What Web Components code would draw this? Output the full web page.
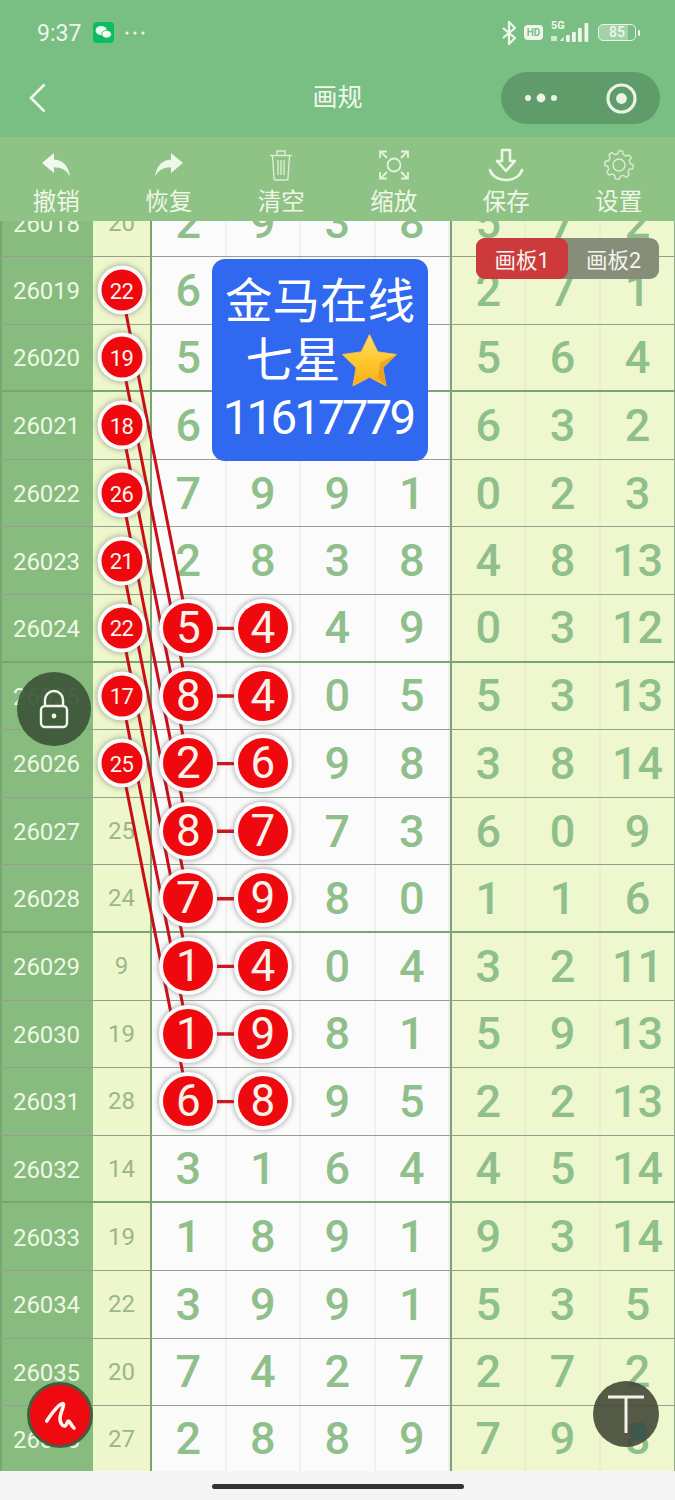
<!DOCTYPE html>
<html lang="zh">
<head>
<meta charset="utf-8">
<title>画规</title>
<style>
  html, body { margin: 0; height: 100%; }
  body { width: 675px; height: 1500px; overflow: hidden; font-family: Roboto, "Noto Sans CJK SC", sans-serif; }
  app-page { height: 1500px; }
</style>
</head>
<body>
<app-page></app-page>
<script>
const CJK = 'Roboto, "Noto Sans CJK SC", sans-serif';
const ROW_H = 67.6;

// issue, sum, four digits, three right columns
const DATA = [
  ['26018', 20, 2, 9, 3, 8, 5, 7, 2],
  ['26019', 22, 6, '', '', '', 2, 7, 1],
  ['26020', 19, 5, '', '', '', 5, 6, 4],
  ['26021', 18, 6, '', '', '', 6, 3, 2],
  ['26022', 26, 7, 9, 9, 1, 0, 2, 3],
  ['26023', 21, 2, 8, 3, 8, 4, 8, 13],
  ['26024', 22, 5, 4, 4, 9, 0, 3, 12],
  ['26025', 17, 8, 4, 0, 5, 5, 3, 13],
  ['26026', 25, 2, 6, 9, 8, 3, 8, 14],
  ['26027', 25, 8, 7, 7, 3, 6, 0, 9],
  ['26028', 24, 7, 9, 8, 0, 1, 1, 6],
  ['26029', 9, 1, 4, 0, 4, 3, 2, 11],
  ['26030', 19, 1, 9, 8, 1, 5, 9, 13],
  ['26031', 28, 6, 8, 9, 5, 2, 2, 13],
  ['26032', 14, 3, 1, 6, 4, 4, 5, 14],
  ['26033', 19, 1, 8, 9, 1, 9, 3, 14],
  ['26034', 22, 3, 9, 9, 1, 5, 3, 5],
  ['26035', 20, 7, 4, 2, 7, 2, 7, 2],
  ['26036', 27, 2, 8, 8, 9, 7, 9, 8]
];

class StatusBar extends HTMLElement {
  constructor() {
    super();
    this.attachShadow({ mode: 'open' });
    this.shadowRoot.innerHTML = `
      <style>
        :host { display: flex; align-items: center; height: 65px; padding: 0 35px 0 37px; color: #eef7ea; box-sizing: border-box; }
        .time { font-size: 23px; width: 56px; padding-top: 1px; }
        .right { margin-left: auto; display: flex; align-items: center; }
        svg { display: block; }
        .hd { width: 19px; height: 15px; border-radius: 4px; background: #eef7ea; color: #79bf83; font-size: 10px; font-weight: 700; line-height: 15px; text-align: center; margin: 0 8px 0 8px; }
        .net { position: relative; width: 41px; height: 22px; margin-right: 6px; }
        .net span { position: absolute; left: 0; top: -2px; font-size: 11px; font-weight: 700; line-height: 12px; }
        .net svg { position: absolute; left: 0; top: 0; }
        .battery { position: relative; width: 38px; height: 17px; border: 1.5px solid #eef7ea; border-radius: 5px; box-sizing: border-box; font-size: 14px; font-weight: 500; line-height: 14px; text-align: center; overflow: hidden; }
        .battery i { position: absolute; left: 0; top: 0; bottom: 0; width: 80%; background: rgba(215,232,210,.45); }
        .battery b { position: relative; font-weight: 500; }
        .tip { width: 2px; height: 6px; margin-left: 2px; background: #eef7ea; border-radius: 1px; }
      </style>
      <span class="time">9:37</span>
      <svg width="21" height="21" viewBox="0 0 21 21">
        <rect width="21" height="21" rx="4" fill="#0bbd62"/>
        <ellipse cx="8.2" cy="8.6" rx="5.6" ry="4.6" fill="#eef9ee"/>
        <ellipse cx="13.6" cy="12.2" rx="4.8" ry="3.9" fill="#f8fff8" stroke="#0bbd62" stroke-width=".8"/>
      </svg>
      <svg width="20" height="4" viewBox="0 0 20 4" style="margin-left:11px">
        <circle cx="2" cy="2" r="1.6" fill="#eef7ea"/><circle cx="10" cy="2" r="1.6" fill="#eef7ea"/><circle cx="18" cy="2" r="1.6" fill="#eef7ea"/>
      </svg>
      <div class="right">
        <svg width="14" height="24" viewBox="0 0 14 24" fill="none" stroke="#eef7ea" stroke-width="2.2">
          <path d="M1 7l12 10-6 6V1l6 6L1 17"/>
        </svg>
        <div class="hd">HD</div>
        <div class="net">
          <span>5G</span>
          <svg width="41" height="22" viewBox="0 0 41 22" fill="#eef7ea">
            <rect x="0" y="14" width="6" height="5" opacity=".75"/>
            <path d="M9 19l3.500-4v4z"/>
            <rect x="15" y="13" width="3.800" height="7" rx="1"/>
            <rect x="21" y="10" width="3.800" height="10" rx="1"/>
            <rect x="27" y="6" width="3.800" height="14" rx="1"/>
            <rect x="33.500" y="1" width="3.800" height="19" rx="1"/>
          </svg>
        </div>
        <div class="battery"><i></i><b>85</b></div>
        <div class="tip"></div>
      </div>
    `;
  }
}

class NavBar extends HTMLElement {
  constructor() {
    super();
    this.attachShadow({ mode: 'open' });
    this.shadowRoot.innerHTML = `
      <style>
        :host { display: grid; grid-template-columns: 1fr auto 1fr; align-items: center; height: 72px; padding: 0 15px; box-sizing: border-box; color: #f1f8ec; }
        .title { font-size: 25px; line-height: 32px; margin-top: -6px; }
        .back { display: block; margin: -6px 0 0 14px; }
        .capsule { justify-self: end; margin-top: -6px; width: 159px; height: 52px; border-radius: 26px; background: #5f9c69; display: flex; align-items: center; justify-content: space-between; padding: 0 23px 0 24px; box-sizing: border-box; }
      </style>
      <svg class="back" width="17" height="30" viewBox="0 0 17 30" fill="none" stroke="#f1f8ec" stroke-width="2.6">
        <path d="M15.500 1.500 2 15l13.500 13.500"/>
      </svg>
      <span class="title">画规</span>
      <div class="capsule">
        <svg width="32" height="10" viewBox="0 0 32 10" fill="#eaf4e6">
          <circle cx="3" cy="5" r="3"/><circle cx="16" cy="5" r="4.400"/><circle cx="29" cy="5" r="3"/>
        </svg>
        <svg width="31" height="31" viewBox="0 0 31 31">
          <circle cx="15.500" cy="15.500" r="13.500" fill="none" stroke="#eaf4e6" stroke-width="3.200"/>
          <circle cx="15.500" cy="15.500" r="5.400" fill="#eaf4e6"/>
        </svg>
      </div>
    `;
  }
}

class ToolItem extends HTMLElement {
  constructor() {
    super();
    this.attachShadow({ mode: 'open' });
    this.shadowRoot.innerHTML = `
      <style>
        :host { display: flex; flex-direction: column; align-items: center; color: #eef7e8; }
        .icon { height: 34px; margin-top: 11px; display: flex; align-items: center; justify-content: center; }
        .label { font-size: 23.5px; line-height: 30px; margin-top: 5px; }
      </style>
      <div class="icon"><slot name="icon"></slot></div>
      <div class="label"><slot></slot></div>
    `;
  }
}

class ToolBar extends HTMLElement {
  constructor() {
    super();
    this.attachShadow({ mode: 'open' });
    this.shadowRoot.innerHTML = `
      <style>
        :host { display: grid; grid-template-columns: repeat(6, 1fr); height: 84px; background: #8fc285; }
      </style>
      <slot></slot>
    `;
  }
}

class LottoBall extends HTMLElement {
  constructor() {
    super();
    this.attachShadow({ mode: 'open' });
    this.shadowRoot.innerHTML = `
      <style>
        :host { position: absolute; left: 50%; top: 50%; z-index: 2; display: flex; align-items: center; justify-content: center; box-sizing: border-box; border-radius: 50%; background: #ef080e; border: 4px solid #fbfbfb; color: #f8f2ea; font-weight: 400; box-shadow: 0 0 5px 1px rgba(80,90,85,.45); transform: translate(-50%, -50%); }
        :host([size="small"]) { width: 49px; height: 49px; font-size: 22px; border-width: 4.5px; letter-spacing: -.5px; padding-top: 1px; }
        :host([size="big"]) { width: 58px; height: 58px; font-size: 44px; border-width: 4.5px; }
      </style>
      <slot></slot>
    `;
  }
}

class BoardRow extends HTMLElement {
  constructor() {
    super();
    this.attachShadow({ mode: 'open' });
  }
  connectedCallback() {
    const i = Number(this.getAttribute('index'));
    const [issue, sum, ...digits] = DATA[i];
    const ballLeft = i >= 1 && i <= 8;
    const ballPair = i >= 6 && i <= 13;
    const cell = (v, k) => {
      const side = k < 4 ? 'mid' : 'end';
      const ball = ballPair && k < 2 ? `<lotto-ball size="big">${v}</lotto-ball>` : '';
      return `<div class="cell ${side}">${ball ? '' : v}${ball}</div>`;
    };
    this.shadowRoot.innerHTML = `
      <style>
        :host { display: grid; grid-template-columns: 93px 57px 2px repeat(4, 74.5px) 2px repeat(3, 74.4px); height: ${ROW_H}px; box-sizing: border-box; border-bottom: 1px solid #959e90; }
        :host([thick]) { border-bottom: 2px solid #7ba474; }
        .issue, .sum, .cell { display: flex; align-items: center; justify-content: center; position: relative; }
        .issue { background: #88bb7e; color: #eef8e6; font-size: 24px; letter-spacing: -.1px; padding-top: 2px; box-sizing: border-box; box-shadow: inset 2px 0 #78a871; }
        .sum { background: #eef6cc; color: #9cb68b; font-size: 24px; }
        .bar { background: #7ba474; }
        .cell { color: #8fbf8a; font-size: 45px; font-weight: 500; border-right: 2px solid #f0f0ee; box-sizing: border-box; }
        .mid { background: #fbfbfb; }
        .end { background: #eef7cd; border-right-color: #e8eecf; }
        .cell:last-child { border-right: 1px solid #8fb084; }
      </style>
      <div class="issue">${issue}</div>
      <div class="sum">${ballLeft ? `<lotto-ball size="small">${sum}</lotto-ball>` : sum}</div>
      <div class="bar"></div>
      ${digits.slice(0, 4).map((v, k) => cell(v, k)).join('')}
      <div class="bar"></div>
      ${digits.slice(4).map((v, k) => cell(v, k + 4)).join('')}
    `;
  }
}

class DrawBoard extends HTMLElement {
  constructor() {
    super();
    this.attachShadow({ mode: 'open' });
    const center = i => ROW_H * i + ROW_H / 2;
    let lines = '';
    for (let i = 1; i <= 8; i++) {
      const y1 = center(i), y2 = center(i + 5);
      lines += `<line x1="121.5" y1="${y1}" x2="188.5" y2="${y2}" stroke="#cc0d16" stroke-width="3"/>`;
      lines += `<line x1="188.5" y1="${y2}" x2="263" y2="${y2}" stroke="#d4141c" stroke-width="3.4"/>`;
    }
    const rows = DATA.map((_, i) => `<board-row index="${i}"${(i - 2) % 4 === 0 ? ' thick' : ''}></board-row>`).join('');
    this.shadowRoot.innerHTML = `
      <style>
        :host { display: block; position: relative; height: 1250px; overflow: hidden; }
        .content { position: relative; margin-top: -31.6px; }
        svg { position: absolute; left: 0; top: 0; z-index: 1; pointer-events: none; }
        ::slotted(*) { z-index: 3; }
      </style>
      <div class="content">
        ${rows}
        <svg width="675" height="${ROW_H * DATA.length}">${lines}</svg>
      </div>
      <slot></slot>
    `;
  }
}

class PromoCard extends HTMLElement {
  constructor() {
    super();
    this.attachShadow({ mode: 'open' });
    this.shadowRoot.innerHTML = `
      <style>
        :host { position: absolute; left: 212px; top: 38px; width: 216px; height: 202px; border-radius: 13px; background: #3068f0; color: #fff; font-size: 47.5px; display: flex; flex-direction: column; align-items: center; justify-content: center; }
        div { line-height: 59px; display: flex; align-items: center; white-space: nowrap; }
        .num { letter-spacing: -2.9px; font-size: 47.5px; margin: -2px 0 0 -4px; }
        svg { margin: -3px -3px 0 0; }
      </style>
      <div>金马在线</div>
      <div>七星<svg width="57" height="53" viewBox="0 0 57 53">
        <defs>
          <linearGradient id="gold" x1="0" y1="0" x2="0" y2="1">
            <stop offset="0" stop-color="#ffe06a"/><stop offset=".55" stop-color="#fdc62a"/><stop offset="1" stop-color="#f6ae1c"/>
          </linearGradient>
        </defs>
        <path d="M28.500 1.500l8.300 17.300 18.700 2.700-13.600 13.200 3.200 18.300-16.600-8.800-16.600 8.800 3.200-18.300L1.500 21.500l18.700-2.700z" fill="url(#gold)" stroke="#f2b64a" stroke-width="1" stroke-linejoin="round"/>
        <path d="M55.500 21.500 42 34.700l3.200 18.300-8-8.500L39 30z" fill="#e89a1c" opacity=".75"/>
      </svg></div>
      <div class="num">11617779</div>
    `;
  }
}

class BoardTabs extends HTMLElement {
  constructor() {
    super();
    this.attachShadow({ mode: 'open' });
    this.shadowRoot.innerHTML = `
      <style>
        :host { position: absolute; left: 476px; top: 17px; width: 183px; height: 41px; display: grid; grid-template-columns: 92px 91px; border-radius: 9px; background: #868d79; color: #f4f4ee; font-size: 21.5px; }
        span { display: flex; align-items: center; justify-content: center; }
        .on { background: #cc3a3c; border-radius: 9px; }
      </style>
      <span class="on">画板1</span>
      <span>画板2</span>
    `;
  }
}

class FloatButton extends HTMLElement {
  constructor() {
    super();
    this.attachShadow({ mode: 'open' });
    this.shadowRoot.innerHTML = `
      <style>
        :host { position: absolute; display: flex; align-items: center; justify-content: center; border-radius: 50%; box-sizing: border-box; }
        :host([kind="lock"]) { left: 17px; top: 451px; width: 74px; height: 74px; background: rgba(60,86,56,.93); }
        :host([kind="pen"]) { left: 27px; top: 1161px; width: 66px; height: 66px; background: #ee0a10; border: 3.5px solid #3f5f40; }
        :host([kind="text"]) { left: 593px; top: 1160px; width: 66px; height: 66px; background: rgba(68,72,56,.9); }
      </style>
      <slot></slot>
    `;
  }
}

class AppPage extends HTMLElement {
  constructor() {
    super();
    this.attachShadow({ mode: 'open' });
    const gear = [];
    for (let i = 0; i < 48; i++) {
      const a = i / 48 * Math.PI * 2 - Math.PI / 2;
      const r = (i % 6) < 3 ? 14.2 : 11.2;
      gear.push((15 + r * Math.cos(a)).toFixed(1) + ',' + (15 + r * Math.sin(a)).toFixed(1));
    }
    this.shadowRoot.innerHTML = `
      <style>
        :host { display: flex; flex-direction: column; width: 675px; background: #f5f5f5; font-family: ${CJK}; }
        .head { background: #79bf83; }
        svg { display: block; }
        .foot { flex: 1; display: flex; align-items: center; justify-content: center; padding-top: 1px; }
        .foot i { width: 252px; height: 4.500px; border-radius: 3px; background: #333; margin-top: 1px; }
      </style>
      <div class="head">
        <status-bar></status-bar>
        <nav-bar></nav-bar>
      </div>
      <tool-bar>
        <tool-item>
          <svg slot="icon" width="30" height="26" viewBox="0 0 30 26"><path d="M1 11 13 1v6.500c8.500.4 14.500 6 16 17-3.500-6.500-8.500-9.300-16-9.300V21z" fill="#f2f8ee"/></svg>
          撤销
        </tool-item>
        <tool-item>
          <svg slot="icon" width="30" height="26" viewBox="0 0 30 26"><path d="M29 11 17 1v6.500C8.500 7.900 2.500 13.500 1 24.500c3.500-6.500 8.500-9.300 16-9.300V21z" fill="#eff6ea"/></svg>
          恢复
        </tool-item>
        <tool-item>
          <svg slot="icon" width="24" height="32" viewBox="0 0 24 32" fill="none" stroke="#dcecd4" stroke-width="1.400">
            <path d="M1 6.500h22M8 6V2h8v4M3.500 6.500l1.500 23c0 1 1 1.500 2 1.500h10c1 0 2-.5 2-1.500l1.500-23M9 11v15M12 11v15M15 11v15"/>
          </svg>
          清空
        </tool-item>
        <tool-item>
          <svg slot="icon" width="30" height="30" viewBox="0 0 30 30" fill="none" stroke="#e4f2dc" stroke-width="1.800">
            <circle cx="15" cy="15" r="6.500"/>
            <path d="M1 8V1.500h7M2 2l6 6M29 8V1.500h-7M28 2l-6 6M1 22v6.500h7M2 28l6-6M29 22v6.500h-7M28 28l-6-6"/>
          </svg>
          缩放
        </tool-item>
        <tool-item>
          <svg slot="icon" width="36" height="34" viewBox="0 0 36 34" fill="none" stroke="#ecf6e4" stroke-width="2.600" stroke-linejoin="round" stroke-linecap="round">
            <path d="M14 2h8v11h5L18 23 9 13h5zM2 22c2 6 8 10 16 10s14-4 16-10"/>
          </svg>
          保存
        </tool-item>
        <tool-item>
          <svg slot="icon" width="30" height="30" viewBox="0 0 30 30" fill="none" stroke="#dcecd4" stroke-width="1.400" stroke-linejoin="round">
            <polygon points="${gear.join(' ')}"/>
            <circle cx="15" cy="15" r="6"/>
          </svg>
          设置
        </tool-item>
      </tool-bar>
      <draw-board>
        <promo-card></promo-card>
        <board-tabs></board-tabs>
        <float-button kind="lock">
          <svg width="30" height="40" viewBox="0 0 30 40" fill="none" stroke="#f2f5ee" stroke-width="2.400">
            <path d="M6 17v-6a9 9 0 0 1 18 0v6"/>
            <rect x="2" y="17" width="26" height="21" rx="4"/>
            <circle cx="15" cy="27" r="2.400" fill="#f2f5ee" stroke="none"/>
          </svg>
        </float-button>
        <float-button kind="pen">
          <svg width="40" height="32" viewBox="0 0 40 32" fill="none" stroke="#fbf6f2" stroke-width="3.600" stroke-linecap="round" stroke-linejoin="round">
            <path d="M6.700 22C10 17 18 5 23 4.500c2 1-3 10-3 15 0 4 2 8 5 7.500 2-.5 2-5 3.500-5s2 4 5.500 7"/>
          </svg>
        </float-button>
        <float-button kind="text">
          <svg width="66" height="66" viewBox="0 0 66 66">
            <path d="M15 16h36M33 16v36" fill="none" stroke="#f2f2ec" stroke-width="3"/>
            <circle cx="46" cy="52" r="8" fill="#3c5a50"/>
          </svg>
        </float-button>
      </draw-board>
      <div class="foot"><i></i></div>
    `;
  }
}

customElements.define('status-bar', StatusBar);
customElements.define('nav-bar', NavBar);
customElements.define('tool-item', ToolItem);
customElements.define('tool-bar', ToolBar);
customElements.define('lotto-ball', LottoBall);
customElements.define('board-row', BoardRow);
customElements.define('draw-board', DrawBoard);
customElements.define('promo-card', PromoCard);
customElements.define('board-tabs', BoardTabs);
customElements.define('float-button', FloatButton);
customElements.define('app-page', AppPage);
</script>
</body>
</html>
